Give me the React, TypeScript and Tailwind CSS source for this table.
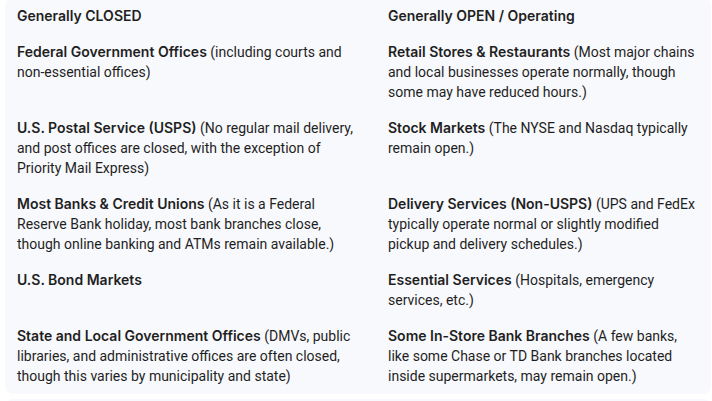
import React from "react";

type Cell = { b: string; t?: string };
const rows: [Cell, Cell][] = [
  [
    { b: "Federal Government Offices", t: " (including courts and non-essential offices)" },
    { b: "Retail Stores & Restaurants", t: " (Most major chains and local businesses operate normally, though some may have reduced hours.)" },
  ],
  [
    { b: "U.S. Postal Service (USPS)", t: " (No regular mail delivery, and post offices are closed, with the exception of Priority Mail Express)" },
    { b: "Stock Markets", t: " (The NYSE and Nasdaq typically remain open.)" },
  ],
  [
    { b: "Most Banks & Credit Unions", t: " (As it is a Federal Reserve Bank holiday, most bank branches close, though online banking and ATMs remain available.)" },
    { b: "Delivery Services (Non-USPS)", t: " (UPS and FedEx typically operate normal or slightly modified pickup and delivery schedules.)" },
  ],
  [
    { b: "U.S. Bond Markets" },
    { b: "Essential Services", t: " (Hospitals, emergency services, etc.)" },
  ],
  [
    { b: "State and Local Government Offices", t: " (DMVs, public libraries, and administrative offices are often closed, though this varies by municipality and state)" },
    { b: "Some In-Store Bank Branches", t: " (A few banks, like some Chase or TD Bank branches located inside supermarkets, may remain open.)" },
  ],
];

const bold = { fontFamily: "Inter, 'Noto Sans', sans-serif" };

function C({ c }: { c: Cell }) {
  return (
    <div className="px-3 py-2">
      <span className="font-semibold" style={bold}>
        {c.b}
      </span>
      {c.t}
    </div>
  );
}

export default function App() {
  return (
    <div
      className="w-[712px] h-[401px] overflow-hidden bg-white text-[14px] leading-5 text-[#1f1f1f]"
      style={{ fontFamily: "Roboto, 'Noto Sans', sans-serif" }}
    >
      <div className="ml-[5px] w-[706px] -mt-[2px] rounded-lg bg-[#f8f9fc]">
        <div className="grid grid-cols-[371px_335px]">
          <div className="px-3 py-2 font-semibold" style={bold}>
            Generally CLOSED
          </div>
          <div className="px-3 py-2 font-semibold" style={bold}>
            Generally OPEN / Operating
          </div>
          {rows.map((r, i) => (
            <React.Fragment key={i}>
              <C c={r[0]} />
              <C c={r[1]} />
            </React.Fragment>
          ))}
        </div>
      </div>
      <div className="ml-[5px] mt-[5px] h-4 w-[706px] rounded-t-lg bg-[#f8f9fc]" />
    </div>
  );
}
